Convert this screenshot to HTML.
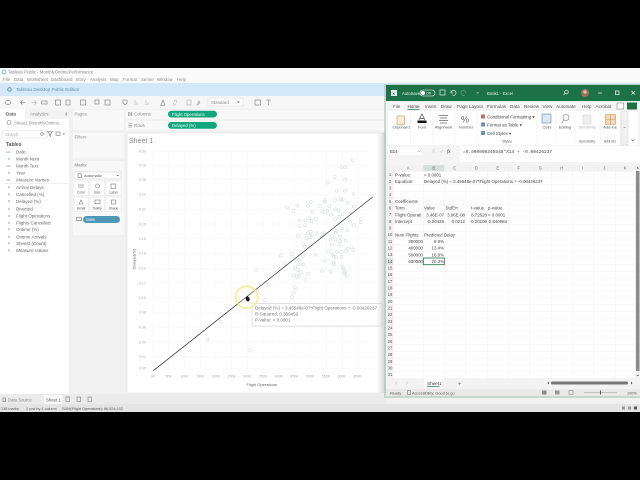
<!DOCTYPE html>
<html><head><meta charset="utf-8"><style>
html,body{margin:0;padding:0;background:#000;width:640px;height:480px;overflow:hidden}
svg{display:block;filter:blur(.35px)}
text{font-family:"Liberation Sans",sans-serif;font-size:4.4px;fill:#555}
.m{fill:#8c8c8c}
.f text{fill:#666;font-size:4.5px}
.i{fill:#7f9ba6;font-size:4px}
.a text{font-size:3.5px;fill:#aaa}
.c text{font-size:4.4px;fill:#444}
.r text{font-size:4.2px;fill:#555;text-anchor:middle}
.h text{font-size:4.2px;fill:#666;text-anchor:middle}
.t text{font-size:4.6px;fill:#555}
.g text{font-size:4px;fill:#555;text-anchor:middle}
.s{fill:none;stroke:#777;stroke-width:.6}
.d circle{r:4.5px;fill:none;stroke:#d6dde1;stroke-width:1.8}
</style></head><body>
<svg width="640" height="480" viewBox="0 0 640 480" xmlns="http://www.w3.org/2000/svg">
<defs><linearGradient id="sh" x1="0" x2="1" y1="0" y2="0"><stop offset="0" stop-color="#ddd" stop-opacity="0"/><stop offset="1" stop-color="#bbb" stop-opacity=".8"/></linearGradient></defs>
<rect width="640" height="480" fill="#000"/>
<rect y="68" width="640" height="344" fill="#f1f1f1"/>
<rect y="68" width="640" height="15" fill="#fafafa"/>
<text x="8" y="73.5" style="font-size:4.3px" class="m">Tableau Public - MonthlyOntimePerformance</text>
<circle cx="4" cy="72" r="2" fill="none" stroke="#7b9aa8" stroke-width=".7"/>
<g class="m" style="font-size:4.3px">
<text x="3" y="80.8" class="m">File</text><text x="14" y="80.8" class="m">Data</text><text x="27" y="80.8" class="m">Worksheet</text><text x="51" y="80.8" class="m">Dashboard</text><text x="75.5" y="80.8" class="m">Story</text><text x="90" y="80.8" class="m">Analysis</text><text x="110" y="80.8" class="m">Map</text><text x="123" y="80.8" class="m">Format</text><text x="141" y="80.8" class="m">Server</text><text x="157" y="80.8" class="m">Window</text><text x="177" y="80.8" class="m">Help</text>
</g>
<rect y="83" width="640" height="13" fill="#d3e9f9"/>
<text x="16" y="91" style="font-size:4.6px;fill:#5a90af">Tableau Desktop Public Edition</text>
<circle cx="9.500" cy="89.500" r="1.800" fill="none" stroke="#4b86a8" stroke-width=".8"/>
<rect y="96" width="640" height="13" fill="#f6f6f6"/>
<g class="s">
<circle cx="8" cy="102.500" r="2.300"/>
<path d="M20.500 102.500h5M20.500 102.500l2-2M20.500 102.500l2 2"/>
<path d="M31.500 102.500h5M36.500 102.500l-2-2M36.500 102.500l-2 2" stroke="#aaa"/>
<rect x="41.500" y="101" width="5.500" height="3"/>
<rect x="55.500" y="100" width="5" height="5"/><rect x="66" y="100" width="4" height="5"/>
<rect x="80.500" y="100" width="5" height="5"/><rect x="95" y="100" width="4" height="4"/><rect x="105" y="100" width="5" height="5"/>
<path d="M123 100h4v3l-2 2-2-2z"/><path d="M135 105v-5M137 105v-3M146 105v-5M148 105v-3" stroke="#bbb"/>
<path d="M161 105l2-5 2 5M160 105.500h5"/><path d="M173 105l2-5 2 1-2 4z" stroke="#bbb"/><rect x="187" y="100" width="4" height="5" stroke="#aaa"/><path d="M197 105l2-4 1 2z" stroke="#999"/>
<rect x="255" y="100" width="5.500" height="5"/><path d="M266 100h5M268.500 100v5"/>
</g>
<rect x="208" y="98" width="35" height="8" fill="#fbfbfb" stroke="#ddd" stroke-width=".5"/>
<text x="211" y="103.800" class="m">Standard</text><path d="M237 101.500h3l-1.500 1.500z" fill="#666"/>

<!-- data pane -->
<rect y="109" width="69" height="303" fill="#fff"/>
<rect x="25" y="109" width="44" height="10" fill="#f3f3f3"/>
<text x="6" y="115.500" style="font-size:4.6px;font-weight:bold;fill:#555">Data</text>
<text x="30" y="115.500" style="font-size:4.6px" class="m">Analytics</text>
<path d="M67 112.500l-1.500 1.500 1.500 1.500" class="s"/>
<circle cx="9" cy="122.500" r="2" class="s"/>
<text x="14" y="124.500" class="m" style="font-size:4.300px">Sheet1 (MonthlyOntime...</text>
<rect x="2" y="130.500" width="45" height="7.500" fill="#fff" stroke="#ddd" stroke-width=".5"/>
<text x="5" y="136" style="font-size:4.2px;fill:#aaa">Search</text>
<circle cx="42" cy="134" r="1.300" class="s"/>
<path d="M47.500 131.500h5l-2 2.500v2.500l-1-1v-1.500z" class="s"/>
<rect x="56" y="132" width="4" height="3.500" class="s"/><path d="M62.500 133.500h2.500l-1.200 1.300z" fill="#666"/>
<text x="6" y="146" style="font-size:5px;font-weight:bold;fill:#555">Tables</text>
<g class="f">
<text x="16" y="153.300">Date</text><text x="16" y="160.300">Month Num</text><text x="16" y="167.300">Month Text</text><text x="16" y="174.300">Year</text><text x="16" y="181.300" font-style="italic">Measure Names</text>
<text x="16" y="188.900">Arrival Delays</text><text x="16" y="195.900">Cancelled (%)</text><text x="16" y="202.900">Delayed (%)</text><text x="16" y="210.300">Diverted</text><text x="16" y="217.300">Flight Operations</text><text x="16" y="224.300">Flights Cancelled</text><text x="16" y="230.900">Ontime (%)</text><text x="16" y="238.300">Ontime Arrivals</text><text x="16" y="244.900" font-style="italic">Sheet1 (Count)</text><text x="16" y="251.900" font-style="italic">Measure Values</text>
</g>
<g class="i" style="font-size:3px">
<text x="6" y="153" class="i" style="font-size:2.8px">Abc</text><text x="8" y="160" class="i">#</text><text x="6" y="167" class="i" style="font-size:2.8px">Abc</text><text x="8" y="174" class="i">#</text><text x="6" y="181" class="i" style="font-size:2.8px">Abc</text>
<text x="8" y="188.600" class="i">#</text><text x="8" y="195.600" class="i">#</text><text x="8" y="202.600" class="i">#</text><text x="8" y="210" class="i">#</text><text x="8" y="217" class="i">#</text><text x="8" y="224" class="i">#</text><text x="8" y="230.600" class="i">#</text><text x="8" y="238" class="i">#</text><text x="8" y="244.600" class="i">#</text><text x="8" y="251.600" class="i">#</text>
</g>
<rect x="4" y="183.300" width="64" height=".5" fill="#ddd"/>

<!-- middle panels -->
<rect x="73" y="110" width="51" height="20" fill="#f8f8f8"/>
<rect x="73" y="133" width="51" height="25" fill="#f8f8f8"/>
<rect x="73" y="161" width="51" height="74" fill="#f8f8f8"/>
<text x="74.500" y="115.500" class="m">Pages</text><text x="74.500" y="138.500" class="m">Filters</text><text x="74.500" y="166.500" style="fill:#777">Marks</text>
<rect x="74" y="172" width="47" height="7" fill="#fff" stroke="#ccc" stroke-width=".5"/>
<text x="84" y="177.200" style="font-size:4px">Automatic</text><rect x="78" y="173.800" width="3.500" height="3.500" class="s"/><path d="M116.500 175h2.500l-1.200 1.300z" fill="#555"/>
<g fill="#fff" stroke="#ddd" stroke-width=".4">
<rect x="74" y="181" width="14.500" height="14.500"/><rect x="90" y="181" width="14.500" height="14.500"/><rect x="106" y="181" width="15" height="14.500"/>
<rect x="74" y="197" width="14.500" height="14.500"/><rect x="90" y="197" width="14.500" height="14.500"/><rect x="106" y="197" width="15" height="14.500"/>
</g>
<g class="s">
<path d="M79 184v4M81 184v4M83 184v4"/><circle cx="97.500" cy="186" r="2"/><rect x="111" y="184" width="4.500" height="4.500"/>
<path d="M79 204l2-4 2 4z"/><rect x="95" y="200" width="5" height="3.500"/><rect x="111.500" y="200" width="4" height="4"/>
</g>
<g class="g"><text x="81" y="193.500" style="font-size:3.300px">Color</text><text x="97" y="193.500" style="font-size:3.300px">Size</text><text x="113.500" y="193.500" style="font-size:3.300px">Label</text><text x="81" y="209.500" style="font-size:3.300px">Detail</text><text x="97" y="209.500" style="font-size:3.300px">Tooltip</text><text x="113.500" y="209.500" style="font-size:3.300px">Shape</text></g>
<rect x="83" y="216" width="37" height="7" rx="3.500" fill="#4e98b5"/><text x="86" y="221" style="font-size:4.300px;fill:#eef">Date</text>
<rect x="76.500" y="217.500" width="5" height="3" class="s"/>

<!-- shelves -->
<rect x="126" y="110" width="260" height="9" fill="#f8f8f8"/><rect x="126" y="121" width="260" height="9" fill="#f8f8f8"/>
<text x="134" y="115.700" style="font-size:4.300px" class="m">Columns</text><text x="134" y="127" style="font-size:4.300px" class="m">Rows</text>
<path d="M128.500 112v4M130 112v4M131.500 112v4M128.500 123.500h3.500M128.500 125.300h3.500M128.500 127h3.500" class="s" stroke="#888"/>
<rect x="168" y="110.700" width="49" height="6.800" rx="3.400" fill="#12a67c"/><rect x="168" y="122" width="49" height="6.800" rx="3.400" fill="#12a67c"/>
<text x="172" y="115.800" style="font-size:4.300px;fill:#e8fff5">Flight Operations</text><text x="172" y="127.100" style="font-size:4.300px;fill:#e8fff5">Delayed (%)</text>

<!-- worksheet -->
<rect x="127" y="133" width="258" height="260" fill="#fff" stroke="#ddd" stroke-width=".5"/>
<text x="129" y="143" style="font-size:7px;fill:#888">Sheet 1</text>
<g stroke="#f5f5f5" stroke-width=".5">
<path d="M153 151H375M153 165.300H375M153 179.700H375M153 194.300H375M153 209.300H375M153 224H375M153 238.700H375M153 253.300H375M153 268.300H375M153 283H375M153 297.700H375M153 312.300H375M153 327H375M153 342H375M153 356.700H375M153 368.300H375"/>
<path d="M153 151V370M168.700 151V370M184.500 151V370M200.200 151V370M215.900 151V370M231.700 151V370M247.400 151V370M263.100 151V370M278.900 151V370M294.600 151V370M310.300 151V370M326 151V370M341.800 151V370M357.500 151V370"/>
</g>
<g class="a">
<text x="139" y="152.300">0.30</text><text x="139" y="166.600">0.28</text><text x="139" y="181">0.26</text><text x="139" y="195.600">0.24</text><text x="139" y="210.600">0.22</text><text x="139" y="225.300">0.20</text><text x="139" y="240">0.18</text><text x="139" y="254.600">0.16</text><text x="139" y="269.600">0.14</text><text x="139" y="284.300">0.12</text><text x="139" y="299">0.10</text><text x="139" y="313.600">0.08</text><text x="139" y="328.300">0.06</text><text x="139" y="343.300">0.04</text><text x="139" y="358">0.02</text><text x="139" y="369.600">0.00</text>
</g>
<g class="a" text-anchor="middle">
<text x="153" y="377.300">0K</text><text x="168.700" y="377.300">50K</text><text x="184.500" y="377.300">100K</text><text x="200.200" y="377.300">150K</text><text x="215.900" y="377.300">200K</text><text x="231.700" y="377.300">250K</text><text x="247.400" y="377.300">300K</text><text x="263.100" y="377.300">350K</text><text x="278.900" y="377.300">400K</text><text x="294.600" y="377.300">450K</text><text x="310.300" y="377.300">500K</text><text x="326" y="377.300">550K</text><text x="341.800" y="377.300">600K</text><text x="357.500" y="377.300">650K</text>
</g>
<text x="261.700" y="386" text-anchor="middle" style="font-size:4px;fill:#666">Flight Operations</text>
<text transform="translate(135.500 259) rotate(-90)" text-anchor="middle" style="font-size:4px;fill:#666">Delayed(%)</text>

<g class="d" transform="translate(125 130) scale(.33333)">
<circle cx="393" cy="420"/><circle cx="431" cy="465"/><circle cx="420" cy="510"/><circle cx="287" cy="575"/><circle cx="248" cy="629"/><circle cx="375" cy="660"/>
<g transform="translate(435 60)">
<circle cx="248" cy="30"/><circle cx="216" cy="51"/><circle cx="226" cy="51"/><circle cx="194" cy="81"/><circle cx="173" cy="98"/><circle cx="225" cy="89"/><circle cx="200" cy="122"/><circle cx="225" cy="122"/><circle cx="251" cy="131"/><circle cx="51" cy="173"/><circle cx="71" cy="183"/><circle cx="82" cy="167"/><circle cx="114" cy="167"/><circle cx="122" cy="156"/><circle cx="128" cy="185"/><circle cx="150" cy="168"/><circle cx="157" cy="184"/><circle cx="164" cy="150"/><circle cx="164" cy="155"/><circle cx="178" cy="168"/><circle cx="172" cy="184"/><circle cx="165" cy="186"/><circle cx="183" cy="194"/><circle cx="195" cy="150"/><circle cx="212" cy="148"/><circle cx="218" cy="149"/><circle cx="233" cy="158"/><circle cx="252" cy="170"/><circle cx="196" cy="178"/><circle cx="206" cy="182"/><circle cx="218" cy="193"/><circle cx="208" cy="200"/><circle cx="196" cy="207"/><circle cx="240" cy="215"/><circle cx="252" cy="225"/><circle cx="272" cy="207"/><circle cx="272" cy="217"/><circle cx="216" cy="236"/><circle cx="232" cy="240"/><circle cx="200" cy="242"/><circle cx="197" cy="247"/><circle cx="90" cy="212"/><circle cx="88" cy="228"/><circle cx="106" cy="211"/><circle cx="118" cy="205"/><circle cx="125" cy="213"/><circle cx="138" cy="206"/><circle cx="105" cy="225"/><circle cx="122" cy="245"/><circle cx="114" cy="250"/><circle cx="125" cy="254"/><circle cx="140" cy="250"/><circle cx="84" cy="258"/><circle cx="110" cy="264"/><circle cx="120" cy="262"/><circle cx="158" cy="252"/><circle cx="164" cy="250"/><circle cx="155" cy="262"/><circle cx="186" cy="258"/><circle cx="196" cy="268"/><circle cx="210" cy="260"/><circle cx="211" cy="273"/><circle cx="182" cy="270"/><circle cx="186" cy="284"/><circle cx="227" cy="272"/><circle cx="208" cy="282"/><circle cx="246" cy="293"/><circle cx="250" cy="300"/><circle cx="228" cy="303"/><circle cx="233" cy="296"/><circle cx="214" cy="306"/><circle cx="175" cy="303"/><circle cx="201" cy="306"/><circle cx="137" cy="314"/><circle cx="188" cy="314"/><circle cx="192" cy="320"/><circle cx="198" cy="322"/><circle cx="215" cy="320"/><circle cx="165" cy="332"/><circle cx="190" cy="338"/><circle cx="192" cy="342"/><circle cx="100" cy="282"/><circle cx="105" cy="290"/><circle cx="32" cy="317"/><circle cx="66" cy="312"/><circle cx="45" cy="340"/><circle cx="88" cy="330"/><circle cx="98" cy="318"/><circle cx="85" cy="343"/><circle cx="99" cy="344"/><circle cx="76" cy="353"/><circle cx="85" cy="360"/><circle cx="93" cy="367"/><circle cx="114" cy="371"/><circle cx="72" cy="375"/><circle cx="80" cy="380"/><circle cx="86" cy="377"/><circle cx="106" cy="390"/><circle cx="156" cy="363"/><circle cx="181" cy="365"/><circle cx="218" cy="350"/><circle cx="222" cy="357"/><circle cx="225" cy="365"/><circle cx="222" cy="370"/><circle cx="230" cy="376"/><circle cx="75" cy="413"/><circle cx="71" cy="429"/><circle cx="66" cy="441"/>
</g></g>
<path d="M153.300 370.700L372.700 197" stroke="#333" stroke-width=".7" fill="none"/>
<rect x="252" y="303.500" width="130" height="22.500" fill="#fff" fill-opacity=".97" stroke="#ccc" stroke-width=".6"/>
<text x="255" y="309.500" textLength="122" lengthAdjust="spacingAndGlyphs" style="font-size:4.500px;fill:#777">Delayed (%) = 3.45548e-07*Flight Operations + -0.00426237</text>
<text x="255" y="315.500" style="font-size:4.500px;fill:#777">R-Squared: 0.380459</text>
<text x="255" y="321.500" style="font-size:4.500px;fill:#777">P-value: &lt; 0.0001</text>
<circle cx="246.700" cy="297.300" r="11" fill="#fffde0" fill-opacity=".25" stroke="#f0ee90" stroke-width="1.500"/>
<path d="M245.500 298l1-1 .5-1 1 .3.600 1 .8.500.3 2.500-1.500 1.200-1.500-.5z" fill="#111"/>
<rect x="376" y="133" width="10" height="260" fill="url(#sh)"/>

<!-- bottom tabs -->
<rect y="394" width="386" height="10" fill="#ebebeb"/>
<rect x="44" y="395" width="18" height="9" fill="#fafafa"/>
<rect x="3" y="398" width="2.500" height="3.500" class="s"/>
<text x="8" y="401.500" style="font-size:4.300px;fill:#888">Data Source</text><text x="46" y="401.500" style="font-size:4.300px;fill:#555">Sheet 1</text>
<g class="s"><rect x="66" y="397" width="3.500" height="4.500"/><rect x="77" y="397" width="3.500" height="4.500"/><rect x="88" y="397" width="3.500" height="4.500"/></g>
<rect y="404" width="640" height="8" fill="#e4e4e4"/>
<text x="1" y="410" style="font-size:3.800px;fill:#555">138 marks</text><text x="26" y="410" style="font-size:3.800px;fill:#555">1 row by 1 column</text><text x="62" y="410" style="font-size:3.800px;fill:#555">SUM(Flight Operations): 66,524,102</text>
<g fill="#999"><rect x="622" y="406.500" width="3" height="3"/><rect x="628" y="406.500" width="3" height="3"/><rect x="634" y="406.500" width="3" height="3" fill="#555"/></g>

<!-- EXCEL -->
<rect x="384" y="84" width="256" height="314" fill="#b9c9bf" opacity=".7"/>
<rect x="386" y="85" width="254" height="311" fill="#f4f4f4"/>
<rect x="386" y="85" width="254" height="16" fill="#1c7146"/>
<rect x="391" y="90" width="6" height="6" fill="#fff" opacity=".9"/><text x="392.300" y="94.800" style="font-size:4px;font-weight:bold;fill:#1c7146">X</text>
<text x="402" y="94.800" style="font-size:4.200px;fill:#e5f2ea">AutoSave</text>
<rect x="420" y="90" width="15" height="6" rx="3" fill="#1c7146" stroke="#fff" stroke-width=".6"/><circle cx="423" cy="93" r="2" fill="#fff"/><text x="426" y="94.500" style="font-size:3.500px;fill:#fff">Off</text>
<rect x="440" y="90" width="5" height="5" fill="none" stroke="#dfeee5" stroke-width=".7"/>
<path d="M451 93a2.500 2.500 0 1 1 1.500 2.200M451 90.500v2.500h2" fill="none" stroke="#dfeee5" stroke-width=".7"/>
<path d="M466 93a2.500 2.500 0 1 0-1 2" fill="none" stroke="#6da588" stroke-width=".7"/>
<path d="M476.500 92.500h2.500l-1.200 1.300z" fill="#dfeee5"/>
<text x="487" y="94.800" style="font-size:4.200px;fill:#e5f2ea">Book1 - Excel</text>
<circle cx="566.500" cy="92" r="1.800" fill="none" stroke="#fff" stroke-width=".7"/><path d="M565 93.500l-1.500 1.500" stroke="#fff" stroke-width=".7"/>
<circle cx="585" cy="93" r="4" fill="#9a6f5f"/><circle cx="585" cy="92" r="1.800" fill="#d9b8a5"/>
<path d="M598 93h4" stroke="#fff" stroke-width=".7"/><rect x="615.500" y="91" width="3.500" height="3.500" fill="none" stroke="#fff" stroke-width=".7"/><path d="M631.500 91l3.500 3.500M635 91l-3.500 3.500" stroke="#fff" stroke-width=".7"/>
<g class="t">
<text x="393" y="107.800" style="font-size:4.500px">File</text><text x="407.500" y="107.800" style="font-size:4.500px;fill:#333">Home</text><text x="425" y="107.800">Insert</text><text x="441" y="107.800">Draw</text><text x="457" y="107.800">Page Layout</text><text x="487" y="107.800">Formulas</text><text x="510" y="107.800">Data</text><text x="524" y="107.800">Review</text><text x="542.500" y="107.800">View</text><text x="556" y="107.800">Automate</text><text x="582" y="107.800">Help</text><text x="595.500" y="107.800">Acrobat</text>
</g>
<rect x="407.500" y="109" width="12" height=".7" fill="#1c7146"/>
<rect x="617" y="103" width="6.500" height="6" fill="#fff" stroke="#777" stroke-width=".5"/>
<rect x="627" y="102.500" width="10" height="7" fill="#1c7146"/>
<rect x="388" y="111" width="250" height="34" rx="1" fill="#fff"/>
<rect x="621" y="111" width="7" height="34" fill="#f0f0f0" stroke="#ccc" stroke-width=".4"/>
<path d="M623.500 127.500h2" stroke="#777" stroke-width=".6"/><path d="M631.500 139.500l1.500 1.500 1.500-1.500" fill="none" stroke="#666" stroke-width=".6"/>
<g class="g">
<text x="401" y="128.500">Clipboard</text><text x="422" y="128.500">Font</text><text x="443.500" y="128.500">Alignment</text><text x="466" y="128.500">Number</text><text x="547" y="128.500">Cells</text><text x="565" y="128.500">Editing</text><text x="587" y="128.500" style="fill:#aaa;font-size:3.800px">Sensitivity</text><text x="610" y="128.500">Add-ins</text>
<text x="507" y="142.500" style="font-size:3.600px">Styles</text><text x="587" y="142.500" style="font-size:3.600px">Sensitivity</text><text x="610" y="142.500" style="font-size:3.600px">Add-ins</text>
</g>
<path d="M410.500 113v30M433 113v30M455 113v30M477 113v30M537 113v30M556 113v30M575 113v30M600 113v30M620 113v30" stroke="#e2e2e2" stroke-width=".4"/>
<g>
<rect x="397" y="116" width="7.500" height="8.500" fill="#f6efd8" stroke="#b59a62" stroke-width=".6"/>
<path d="M419 120l3-6 3 6M420 118.500h4" fill="none" stroke="#444" stroke-width=".7"/><rect x="417.500" y="120.500" width="9" height="2.500" fill="#111"/>
<path d="M439 115.500h9M440 118h7M439 120.500h9M440 123h7" stroke="#666" stroke-width=".7"/>
<text x="461" y="122.500" style="font-size:9px;fill:#666">%</text>
<rect x="481" y="114.500" width="4" height="4" fill="#c76a6a"/><rect x="481" y="122.500" width="4" height="4" fill="#6a8fbe"/><rect x="481" y="131" width="4" height="4" fill="#6a8fbe"/>
<text x="487" y="118.300" style="font-size:4.400px;fill:#444">Conditional Formatting ▾</text><text x="487" y="126.500" style="font-size:4.400px;fill:#444">Format as Table ▾</text><text x="487" y="134.800" style="font-size:4.400px;fill:#444">Cell Styles ▾</text>
<rect x="542" y="114" width="9" height="9" fill="#dbe7f3" stroke="#5f86ad" stroke-width=".6"/>
<circle cx="566" cy="117.500" r="3" fill="none" stroke="#777" stroke-width=".6"/><path d="M564 120l-2.500 3.500" stroke="#777" stroke-width=".6"/>
<rect x="583" y="115" width="8" height="9" fill="#efefef" stroke="#ccc" stroke-width=".5"/>
<rect x="605.500" y="114.500" width="10" height="10" fill="#f4d9b8" stroke="#c79a63" stroke-width=".6"/><path d="M610.500 114.500v10M605.500 119.500h10" stroke="#c79a63" stroke-width=".6"/>
</g>
<rect x="388" y="147" width="33" height="8" fill="#fff" opacity=".8"/>
<text x="390" y="152.800" style="font-size:4.200px;fill:#444">B14</text>
<path d="M418 150.500l1.300 1.300 1.300-1.300" fill="none" stroke="#666" stroke-width=".5"/>
<path d="M432 149.500l3 3M435 149.500l-3 3" stroke="#bbb" stroke-width=".5"/><path d="M440 151l1 1.500 2.500-3" stroke="#bbb" stroke-width=".5" fill="none"/>
<text x="447" y="153" style="font-size:5px;font-style:italic;font-family:'Liberation Serif',serif;fill:#444">fx</text>
<rect x="460" y="146" width="180" height="16" fill="#fff"/>
<text x="463" y="152.800" style="font-family:'Liberation Mono',monospace;font-size:4.500px;fill:#444">=0.000000345548*X14 + -0.00426237</text>

<!-- grid -->
<rect x="386" y="165" width="254" height="213" fill="#fff"/>
<rect x="386" y="165" width="249" height="6.300" fill="#f2f2f2"/>
<rect x="386" y="171" width="7.300" height="207" fill="#f2f2f2"/>
<rect x="423.300" y="165" width="21" height="6.300" fill="#d8dedb"/>
<rect x="386" y="258" width="7.300" height="6.700" fill="#d8dedb"/>
<g stroke="#ebebeb" stroke-width=".4">
<path d="M393.300 165V378M423.300 165V378M444.300 165V378M465.300 165V378M487.300 165V378M508.300 165V378M529.300 165V378M551.300 165V378M572.300 165V378M593.300 165V378M615.300 165V378"/>
<path d="M386 171.300H635M386 178H635M386 184.700H635M386 191.300H635M386 198H635M386 204.700H635M386 211.300H635M386 218H635M386 224.700H635M386 231.300H635M386 238H635M386 244.700H635M386 251.300H635M386 258H635M386 264.700H635M386 271.300H635M386 278H635M386 284.700H635M386 291.300H635M386 298H635M386 304.700H635M386 311.300H635M386 318H635M386 324.700H635M386 331.300H635M386 338H635M386 344.700H635M386 351.300H635M386 358H635M386 364.700H635M386 371.300H635"/>
</g>
<g class="h">
<text x="408.300" y="169.500">A</text><text x="433.800" y="169.500">B</text><text x="454.800" y="169.500">C</text><text x="476.300" y="169.500">D</text><text x="497.800" y="169.500">E</text><text x="518.800" y="169.500">F</text><text x="540.300" y="169.500">G</text><text x="561.800" y="169.500">H</text><text x="582.800" y="169.500">I</text><text x="604.300" y="169.500">J</text><text x="625" y="169.500">K</text>
</g>
<g class="r">
<text x="390" y="176.200">1</text><text x="390" y="182.900">2</text><text x="390" y="189.500">3</text><text x="390" y="196.200">4</text><text x="390" y="202.900">5</text><text x="390" y="209.500">6</text><text x="390" y="216.200">7</text><text x="390" y="222.900">8</text><text x="390" y="229.500">9</text><text x="390" y="236.200">10</text><text x="390" y="242.900">11</text><text x="390" y="249.500">12</text><text x="390" y="256.200">13</text><text x="390" y="262.900">14</text><text x="390" y="269.500">15</text><text x="390" y="276.200">16</text><text x="390" y="282.900">17</text><text x="390" y="289.500">18</text><text x="390" y="296.200">19</text><text x="390" y="302.900">20</text><text x="390" y="309.500">21</text><text x="390" y="316.200">22</text><text x="390" y="322.900">23</text><text x="390" y="329.500">24</text><text x="390" y="336.200">25</text><text x="390" y="342.900">26</text><text x="390" y="349.500">27</text><text x="390" y="356.200">28</text><text x="390" y="362.900">29</text><text x="390" y="369.500">30</text><text x="390" y="376.200">31</text>
</g>
<g class="c">
<text x="395" y="176.300">P-value:</text><text x="424" y="176.300">&lt; 0.0001</text>
<text x="395" y="182.900">Equation:</text><text x="424" y="182.900">Delayed (%) = 3.45548e-07*Flight Operations + -0.00426237</text>
<text x="395" y="202.900">Coefficients</text>
<text x="395" y="209.600">Term</text><text x="424" y="209.600">Value</text><text x="445.500" y="209.600">StdErr</text><text x="471" y="209.600">t-value</text><text x="488" y="209.600">p-value</text>
<text x="395" y="216.300">Flight Operati</text><text x="444" y="216.300" text-anchor="end">3.46E-07</text><text x="465" y="216.300" text-anchor="end">3.96E-08</text><text x="487" y="216.300" text-anchor="end">8.72628</text><text x="488" y="216.300">&lt; 0.0001</text>
<text x="395" y="222.900">Intercept</text><text x="444" y="222.900" text-anchor="end">-0.00426</text><text x="465" y="222.900" text-anchor="end">0.0212</text><text x="487" y="222.900" text-anchor="end">-0.20106</text><text x="507" y="222.900" text-anchor="end">0.840984</text>
<text x="395" y="236.300">Num Flights</text><text x="424" y="236.300">Predicted Delay</text>
<text x="423" y="242.900" text-anchor="end">300000</text><text x="444" y="242.900" text-anchor="end">9.9%</text>
<text x="423" y="249.600" text-anchor="end">400000</text><text x="444" y="249.600" text-anchor="end">13.4%</text>
<text x="423" y="256.300" text-anchor="end">500000</text><text x="444" y="256.300" text-anchor="end">16.9%</text>
<text x="423" y="262.900" text-anchor="end">600000</text><text x="444" y="262.900" text-anchor="end">20.3%</text>
</g>
<rect x="423.300" y="258" width="21" height="6.700" fill="none" stroke="#1c7146" stroke-width=".8"/>
<rect x="635" y="165" width="5" height="213" fill="#f0f0f0"/>
<path d="M636.500 168.500h2.500l-1.250-1.500z" fill="#444"/>
<rect x="636" y="171" width="3.500" height="200" fill="#8a8a8a"/>
<path d="M636.500 375h2.500l-1.200 1.300z" fill="#444"/>
<!-- excel tabs -->
<rect x="386" y="378" width="254" height="11" fill="#f3f3f3"/>
<rect x="424" y="378" width="18" height="10" fill="#fff"/>
<text x="427" y="385" style="font-size:4.600px;fill:#333">Sheet1</text><rect x="427" y="386.300" width="12.500" height=".7" fill="#1c7146"/>
<text x="458" y="385.500" style="font-size:6px;fill:#777">+</text>
<path d="M397 381.500l-1.500 1.500 1.500 1.500M406 381.500l1.500 1.500-1.500 1.500" fill="none" stroke="#aaa" stroke-width=".5"/>
<rect x="551" y="381.500" width="77" height="3" rx="1" fill="#777"/>
<path d="M549 381.500v3l-1.500-1.500zM631 381.500v3l1.500-1.500z" fill="#444"/>
<rect x="386" y="389" width="254" height="7" fill="#e9e9e9"/>
<text x="390" y="394.300" style="font-size:3.900px;fill:#555">Ready</text><text x="412" y="394.300" style="font-size:3.900px;fill:#555">Accessibility: Good to go</text>
<rect x="407.500" y="390.500" width="3" height="4" class="s"/>
<rect x="542" y="390.500" width="4.500" height="4" fill="#888"/><rect x="555" y="390.500" width="4.500" height="4" fill="#999"/><rect x="569" y="390.500" width="4" height="4" fill="none" stroke="#777" stroke-width=".5"/>
<path d="M584 392.500h33" stroke="#888" stroke-width=".4"/><rect x="600" y="390.500" width=".9" height="4" fill="#444"/>
<text x="627" y="394.300" style="font-size:3.800px;fill:#555">100%</text>
</svg>
</body></html>
